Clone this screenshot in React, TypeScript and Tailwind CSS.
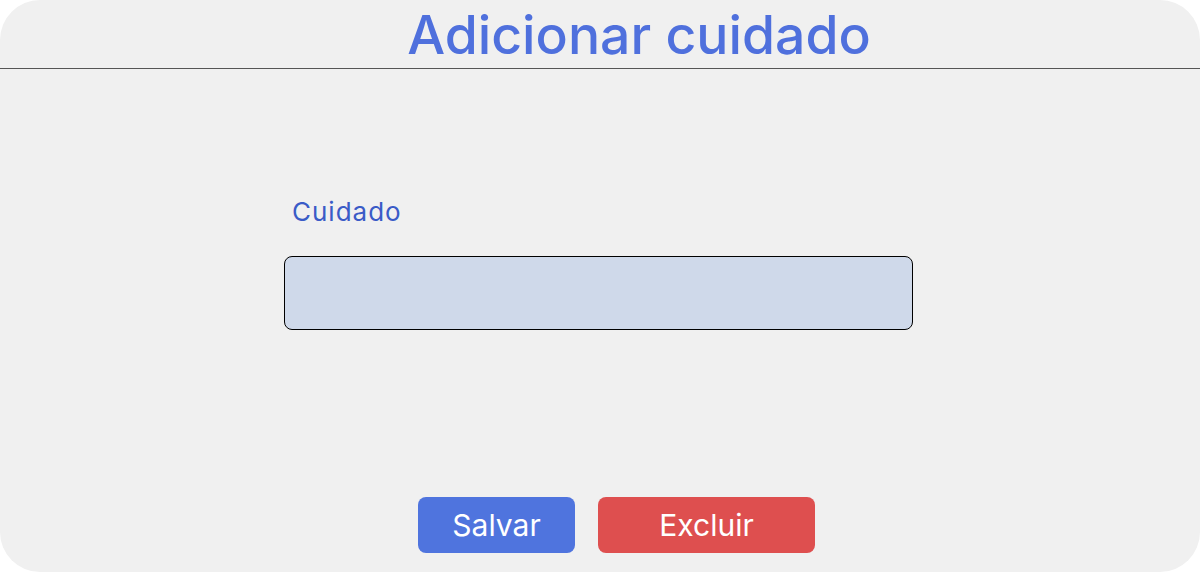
export default function App() {
  return (
    <div className="w-[1200px] h-[572px] bg-white" style={{ fontFamily: 'Inter, "Noto Sans", sans-serif' }}>
      <div className="h-full rounded-[40px] bg-[#f0f0f0] flex flex-col">
        <header className="h-[69px] border-b border-[#555] flex items-start justify-center pl-[78px]">
          <h1 className="text-[53.5px] leading-none mt-[8px] text-[#4f70dd] font-medium">
            Adicionar cuidado
          </h1>
        </header>

        <div className="flex-1 flex flex-col">
          <div className="pl-[284px] pt-[130px]">
            <label className="block pl-[8px] text-[26px] leading-none tracking-[1px] text-[#3a5bc7]">Cuidado</label>
            <input
              type="text"
              className="mt-[31px] block w-[629px] h-[74px] rounded-[8px] border border-black bg-[#cfd9ea] outline-none"
            />
          </div>

          <div className="mt-auto mb-[19px] flex justify-center gap-[23px] pl-[33px]">
            <button className="w-[157px] h-[56px] rounded-[8px] bg-[#4f74de] text-white text-[30px]">
              Salvar
            </button>
            <button className="w-[217px] h-[56px] rounded-[8px] bg-[#de4f4f] text-white text-[30px]">
              Excluir
            </button>
          </div>
        </div>
      </div>
    </div>
  );
}
